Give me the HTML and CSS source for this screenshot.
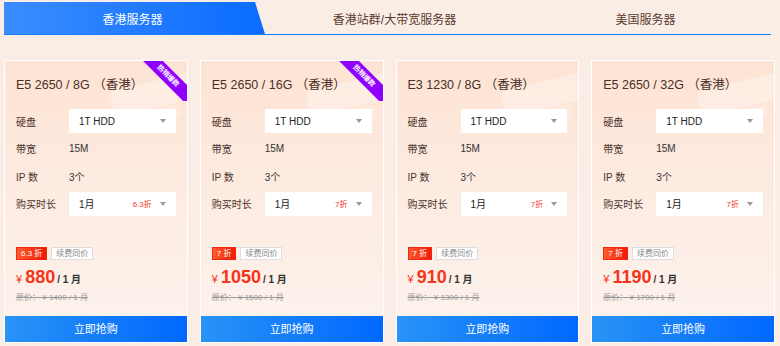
FILE: index.html
```html
<!DOCTYPE html>
<html lang="zh-CN">
<head>
    <meta charset="UTF-8">
    <title>香港服务器</title>
    <link rel="stylesheet" href="styles.css">
</head>
<body>
<div class="page">
    <div class="tabs">
        <div class="tab active">香港服务器</div>
        <div class="tab">香港站群/大带宽服务器</div>
        <div class="tab">美国服务器</div>
    </div>

    <div class="cards">
        <div class="card">
            <div class="ribbon"><span>热销爆款</span></div>
            <div class="title">E5 2650 / 8G （香港）</div>
            <div class="rows">
                <div class="row"><span class="label">硬盘</span><div class="select"><span>1T HDD</span><i class="arrow"></i></div></div>
                <div class="row"><span class="label">带宽</span><span class="val">15M</span></div>
                <div class="row"><span class="label">IP 数</span><span class="val">3个</span></div>
                <div class="row"><span class="label">购买时长</span><div class="select"><span>1月</span><em>6.3折</em><i class="arrow"></i></div></div>
            </div>
            <div class="tags"><span class="tag red">6.3 折</span><span class="tag plain">续费同价</span></div>
            <div class="price"><span class="yen">¥</span><b>880</b><span class="unit">/ 1 月</span></div>
            <div class="orig">原价： ¥ 1400 / 1 月</div>
            <div class="buy">立即抢购</div>
        </div>

        <div class="card">
            <div class="ribbon"><span>热销爆款</span></div>
            <div class="title">E5 2650 / 16G （香港）</div>
            <div class="rows">
                <div class="row"><span class="label">硬盘</span><div class="select"><span>1T HDD</span><i class="arrow"></i></div></div>
                <div class="row"><span class="label">带宽</span><span class="val">15M</span></div>
                <div class="row"><span class="label">IP 数</span><span class="val">3个</span></div>
                <div class="row"><span class="label">购买时长</span><div class="select"><span>1月</span><em>7折</em><i class="arrow"></i></div></div>
            </div>
            <div class="tags"><span class="tag red">7 折</span><span class="tag plain">续费同价</span></div>
            <div class="price"><span class="yen">¥</span><b>1050</b><span class="unit">/ 1 月</span></div>
            <div class="orig">原价： ¥ 1500 / 1 月</div>
            <div class="buy">立即抢购</div>
        </div>

        <div class="card">
            <div class="title">E3 1230 / 8G （香港）</div>
            <div class="rows">
                <div class="row"><span class="label">硬盘</span><div class="select"><span>1T HDD</span><i class="arrow"></i></div></div>
                <div class="row"><span class="label">带宽</span><span class="val">15M</span></div>
                <div class="row"><span class="label">IP 数</span><span class="val">3个</span></div>
                <div class="row"><span class="label">购买时长</span><div class="select"><span>1月</span><em>7折</em><i class="arrow"></i></div></div>
            </div>
            <div class="tags"><span class="tag red">7 折</span><span class="tag plain">续费同价</span></div>
            <div class="price"><span class="yen">¥</span><b>910</b><span class="unit">/ 1 月</span></div>
            <div class="orig">原价： ¥ 1300 / 1 月</div>
            <div class="buy">立即抢购</div>
        </div>

        <div class="card">
            <div class="title">E5 2650 / 32G （香港）</div>
            <div class="rows">
                <div class="row"><span class="label">硬盘</span><div class="select"><span>1T HDD</span><i class="arrow"></i></div></div>
                <div class="row"><span class="label">带宽</span><span class="val">15M</span></div>
                <div class="row"><span class="label">IP 数</span><span class="val">3个</span></div>
                <div class="row"><span class="label">购买时长</span><div class="select"><span>1月</span><em>7折</em><i class="arrow"></i></div></div>
            </div>
            <div class="tags"><span class="tag red">7 折</span><span class="tag plain">续费同价</span></div>
            <div class="price"><span class="yen">¥</span><b>1190</b><span class="unit">/ 1 月</span></div>
            <div class="orig">原价： ¥ 1700 / 1 月</div>
            <div class="buy">立即抢购</div>
        </div>
    </div>
</div>
</body>
</html>
```

FILE: styles.css
```css
body {
    margin: 0;
    background: #faede5;
    font-family: "Liberation Sans", "Noto Sans CJK SC", sans-serif;
    color: #4a342e;
}
.page {
    padding: 2px 5px 0 4px;
}

/* tabs */
.tabs {
    display: flex;
    height: 32px;
    border-bottom: 1.5px solid #1a7bff;
    margin-right: 4px;
}
.tab {
    flex: 1;
    display: flex;
    align-items: center;
    justify-content: center;
    font-size: 12px;
    color: #5a3a30;
}
.tab.active {
    flex: 0 0 257px;
    background: linear-gradient(90deg, #3b8cff, #0a6cff);
    color: #fff;
    clip-path: polygon(0 0, 251px 0, 100% 100%, 0 100%);
    padding-right: 4px;
}
.tabs .tab:nth-child(2) { padding-left: 4px; }

/* cards */
.cards {
    display: grid;
    grid-template-columns: repeat(4, 1fr);
    gap: 12px;
    margin-top: 25px;
}
.card {
    position: relative;
    overflow: hidden;
    border: 1px solid #fff;
    background: linear-gradient(180deg, #fde3d3 0%, #fdebe1 45%, #fcf3ee 100%);
    height: 281px;
    display: flex;
    flex-direction: column;
}
.card::before {
    content: "";
    position: absolute;
    top: 20px;
    right: -14px;
    width: 90px;
    height: 26px;
    border-radius: 6px;
    background: rgba(255, 255, 255, 0.3);
    transform: rotate(-14deg);
}
.card::after {
    content: "";
    position: absolute;
    top: 50px;
    right: 6px;
    width: 56px;
    height: 12px;
    border-radius: 4px;
    background: rgba(255, 255, 255, 0.22);
    transform: rotate(-14deg);
}

.ribbon {
    position: absolute;
    top: -3px;
    right: 0;
    width: 47px;
    height: 43px;
    overflow: hidden;
    z-index: 2;
}
.ribbon span {
    position: absolute;
    left: -8px;
    top: 11px;
    width: 72px;
    height: 14px;
    line-height: 14px;
    background: #8f00ff;
    color: #fff;
    font-size: 7px;
    font-weight: bold;
    text-align: center;
    transform: rotate(45deg);
}

.title {
    position: relative;
    z-index: 1;
    margin: 16px 0 0 11px;
    font-size: 12.5px;
    line-height: 16px;
    color: #4a2f28;
}
.rows {
    position: relative;
    z-index: 1;
    display: flex;
    flex-direction: column;
    gap: 3.6px;
    margin: 16px 11px 0 11px;
}
.row {
    display: flex;
    align-items: center;
    height: 24px;
    font-size: 10px;
}
.label {
    width: 53px;
    color: #4a342e;
}
.val {
    color: #333;
}
.select {
    flex: 1;
    display: flex;
    align-items: center;
    height: 24px;
    background: #fff;
    padding: 0 10px;
    color: #222;
}
.select span {
    flex: 1;
}
.select em {
    font-style: normal;
    font-size: 8px;
    color: #f23a2a;
    margin-right: 8px;
}
.arrow {
    width: 0;
    height: 0;
    border-left: 3.5px solid transparent;
    border-right: 3.5px solid transparent;
    border-top: 4px solid #999;
}

.tags {
    display: flex;
    gap: 4px;
    margin: 31px 0 0 11px;
}
.tag {
    font-size: 8px;
    line-height: 11px;
    height: 11px;
    padding: 0 4px;
}
.tag.red {
    background: linear-gradient(90deg, #ff5b2a, #f01a08);
    color: #fff;
    border: 1px solid #f02a10;
}
.tag.plain {
    background: #fff;
    color: #888;
    border: 1px solid #ddd;
}
.price {
    display: flex;
    align-items: baseline;
    margin: 7px 0 0 11px;
    color: #f5341b;
}
.price .yen {
    font-size: 11px;
    margin-right: 3px;
}
.price b {
    font-size: 18px;
}
.price .unit {
    font-size: 10px;
    font-weight: bold;
    color: #333;
    margin-left: 2px;
}
.orig {
    margin: 3px 0 0 11px;
    font-size: 8px;
    color: #999;
    text-decoration: line-through;
}
.buy {
    margin-top: auto;
    height: 26px;
    line-height: 26px;
    text-align: center;
    font-size: 11px;
    color: #fff;
    background: linear-gradient(90deg, #2993f6, #0068ff);
}
```
